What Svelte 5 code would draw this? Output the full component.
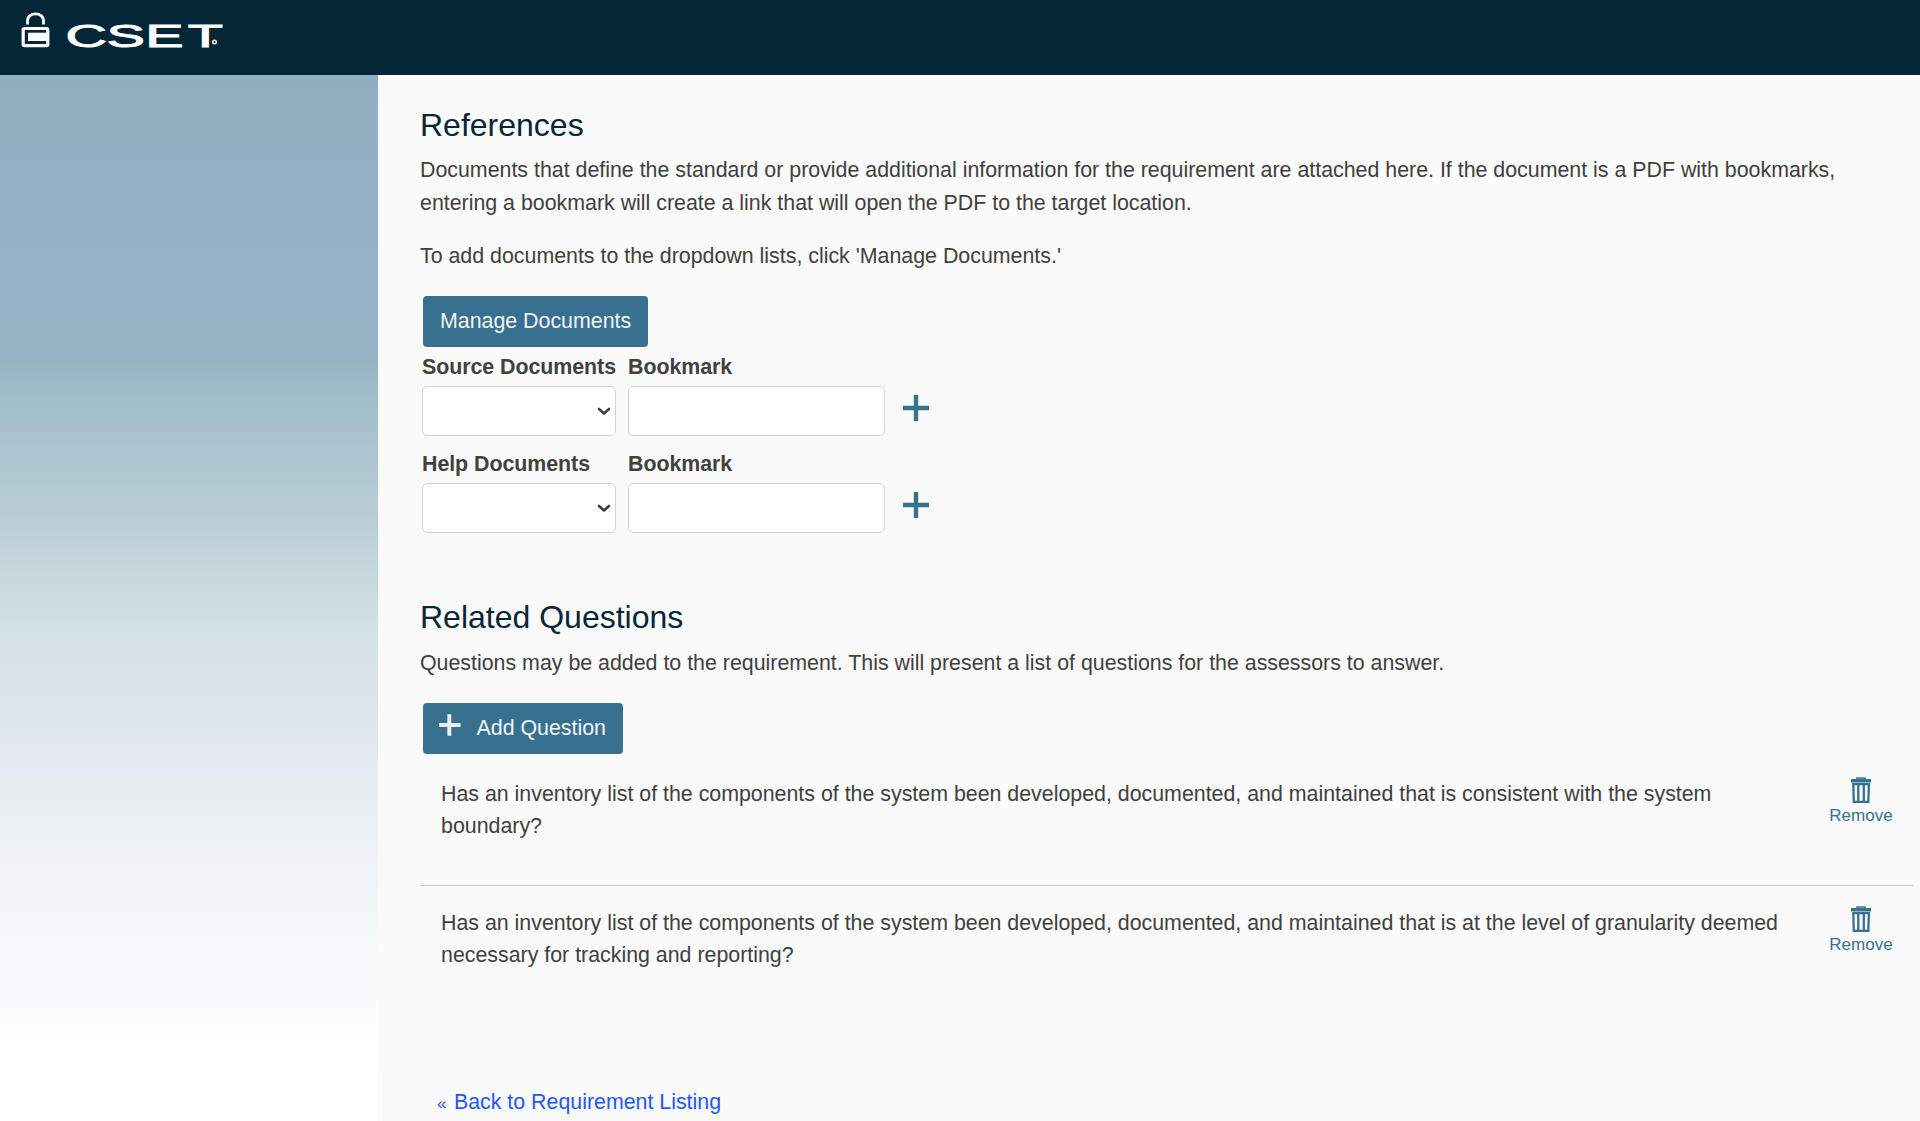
<script>
  const documentGroups = ['Source Documents', 'Help Documents'];
  const questions = [
    ['Has an inventory list of the components of the system been developed, documented, and maintained that is consistent with the system', 'boundary?'],
    ['Has an inventory list of the components of the system been developed, documented, and maintained that is at the level of granularity deemed', 'necessary for tracking and reporting?']
  ];
</script>

<div class="page">
  <header>
    <svg class="logo" width="240" height="75" viewBox="0 0 240 75" role="img" aria-label="CSET">
      <path d="M27.5 24.5v-3.5c0-9.5 16-9.5 16 0v3.5" fill="none" stroke="#fff" stroke-width="2.8" />
      <rect x="23.2" y="28.5" width="24.6" height="17.2" rx="1.2" fill="none" stroke="#fff" stroke-width="3.2" />
      <rect x="28" y="32.7" width="20" height="8.3" fill="#fff" />
      <text class="wordmark" transform="scale(1.8 1)" x="36.4 59.2 80.7 104.3" y="46.7">CSET</text>
      <circle cx="214.5" cy="42" r="1.8" fill="none" stroke="#fff" stroke-width="1.4" />
    </svg>
  </header>
  <div class="body">
    <aside></aside>
    <main>
      <section class="references">
        <h2>References</h2>
        <p>Documents that define the standard or provide additional information for the requirement are attached here. If the document is a PDF with bookmarks,<br />entering a bookmark will create a link that will open the PDF to the target location.</p>
        <p class="second">To add documents to the dropdown lists, click 'Manage Documents.'</p>
        <button class="primary manage">Manage Documents</button>
        {#each documentGroups as group}
          <div class="docs">
            <b>{group}</b>
            <b>Bookmark</b>
            <span></span>
            <div class="field select">
              <svg width="14" height="10" viewBox="0 0 14 10"><path d="M2 3 7 7.5 12 3" fill="none" stroke="#404040" stroke-width="2.6" stroke-linecap="round" stroke-linejoin="round" /></svg>
            </div>
            <input class="field" aria-label="Bookmark" />
            <svg class="add" width="26" height="26" viewBox="0 0 26 26"><path d="M13 0v26M0 13h26" stroke="#37718f" stroke-width="4.4" /></svg>
          </div>
        {/each}
      </section>
      <section class="related">
        <h2>Related Questions</h2>
        <p>Questions may be added to the requirement. This will present a list of questions for the assessors to answer.</p>
        <button class="primary question-add">
          <svg width="22" height="22" viewBox="0 0 22 22"><path d="M10.5 0v22M0 11h22" stroke="#e9eff2" stroke-width="4" /></svg>
          <span>Add Question</span>
        </button>
        {#each questions as lines}
          <div class="question">
            <p>{lines[0]}<br />{lines[1]}</p>
            <div class="remove">
              <svg width="20" height="27" viewBox="0 0 20 27">
                <path d="M6 2.5V1h8v1.5" fill="none" stroke="#37718f" stroke-width="1.5" />
                <path d="M0 2h20v3.5H0z" fill="#37718f" />
                <path d="M2.3 7.2h15.6l-.6 17.7H2.8zM7.3 7v17M12.8 7v17" fill="none" stroke="#37718f" stroke-width="2.3" />
              </svg>
              <span>Remove</span>
            </div>
          </div>
        {/each}
        <a href="#listing"><span class="chevrons">«</span> Back to Requirement Listing</a>
      </section>
    </main>
  </div>
</div>

<style>
  .page {
    width: 1920px;
    height: 1121px;
    overflow: hidden;
    font: 21.36px/32.4px 'Liberation Sans', Arial, sans-serif;
    color: #404040;
  }
  header { height: 75px; background: #052636; }
  svg { display: block; }
  .wordmark { font: 32px 'Liberation Sans', sans-serif; fill: #fff; stroke: #fff; stroke-width: 0.9px; }
  .body { display: flex; height: 1046px; }
  aside {
    width: 378px;
    flex: none;
    background: linear-gradient(#8fafc0 0, #97b3c7 220px, #95b3c3 283px, #a3bfca 335px, #bed0da 464px, #c6d7de 497px, #d2dfe5 551px, #e0e7ee 657px, #edf2f4 766px, #f8fafb 893px, #fff 1000px);
  }
  main { flex: 1; min-width: 0; padding: 31px 7px 0 42px; background: #fafafa; }
  h2 { margin: 0; font-size: 32px; line-height: 39px; font-weight: 400; color: #052636; }
  p { margin: 0; white-space: nowrap; }
  .references h2 + p { margin-top: 9px; line-height: 32.5px; }
  .related h2 + p { margin-top: 10px; }
  .references p.second { margin-top: 21px; }
  .references { height: 492px; }
  .primary {
    display: flex;
    align-items: center;
    box-sizing: border-box;
    height: 51px;
    margin: 0 0 0 3px;
    padding: 0 17px 2px;
    border: 0;
    border-radius: 4px;
    background: #37718f;
    color: #f2f5f7;
    font: inherit;
    white-space: nowrap;
  }
  .manage { width: 225px; margin-top: 24px; margin-bottom: 3px; }
  .docs {
    display: grid;
    grid-template-columns: 194px 257px 26px;
    column-gap: 12px;
    grid-template-rows: 36px 50px;
    height: 97px;
    margin-left: 2px;
  }
  b { margin-top: 1px; white-space: nowrap; letter-spacing: -0.04px; }
  .field {
    box-sizing: border-box;
    width: 100%;
    height: 50px;
    border: 1px solid #ced4da;
    border-radius: 5px;
    background: #fff;
  }
  .select { display: flex; align-items: center; justify-content: flex-end; padding-right: 4px; }
  .add { margin: 9px 0 0 6px; }
  .question-add { width: 200px; margin-top: 24px; margin-bottom: 23px; gap: 15px; }
  .question-add svg { margin: 0 0 5px -1px; }
  .question-add span { margin-left: 1px; }
  .question { display: flex; justify-content: space-between; height: 108px; padding-left: 21px; }
  .question p { padding-top: 1px; line-height: 32px; }
  .question + .question { border-top: 1px solid #ccc; padding-top: 20px; height: 158px; }
  .remove { display: flex; flex-direction: column; align-items: center; width: 64px; margin-right: 20px; color: #37718f; font-size: 17px; line-height: 22px; }
  .remove span { margin-top: 1px; }
  a { display: block; margin: 22px 0 0 17px; color: #1f57ff; text-decoration: none; }
  .chevrons { display: inline-block; width: 11px; font-size: 17px; line-height: 20px; }
</style>
